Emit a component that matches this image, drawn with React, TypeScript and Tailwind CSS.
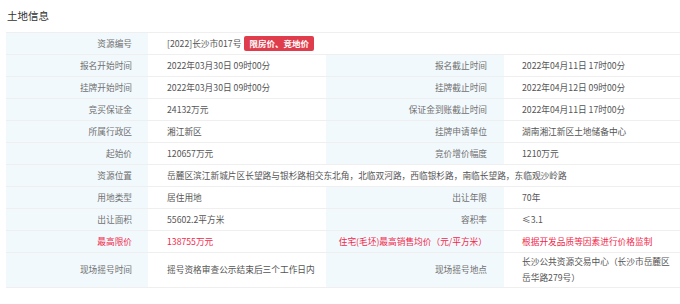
import React from "react";

type Row = {
    label: string;
    value: React.ReactNode;
    label2?: string;
    value2?: React.ReactNode;
    red?: boolean;
    tall?: boolean;
};

const ROWS: Row[] = [
    {
        label: "资源编号",
        value: (
            <span className="flex items-center gap-[3px]">
                <span>[2022]长沙市017号</span>
                <span className="rounded-[2px] bg-[#df3d4c] px-[5px] text-[8.5px] leading-[15px] font-bold text-white">
                    限房价、竞地价
                </span>
            </span>
        ),
    },
    { label: "报名开始时间", value: "2022年03月30日 09时00分", label2: "报名截止时间", value2: "2022年04月11日 17时00分" },
    { label: "挂牌开始时间", value: "2022年03月30日 09时00分", label2: "挂牌截止时间", value2: "2022年04月12日 09时00分" },
    { label: "竞买保证金", value: "24132万元", label2: "保证金到账截止时间", value2: "2022年04月11日 17时00分" },
    { label: "所属行政区", value: "湘江新区", label2: "挂牌申请单位", value2: "湖南湘江新区土地储备中心" },
    { label: "起始价", value: "120657万元", label2: "竞价增价幅度", value2: "1210万元" },
    { label: "资源位置", value: "岳麓区滨江新城片区长望路与银杉路相交东北角，北临双河路，西临银杉路，南临长望路，东临观沙岭路" },
    { label: "用地类型", value: "居住用地", label2: "出让年限", value2: "70年" },
    { label: "出让面积", value: "55602.2平方米", label2: "容积率", value2: "≤3.1" },
    {
        label: "最高限价",
        value: "138755万元",
        label2: "住宅(毛坯)最高销售均价（元/平方米）",
        value2: "根据开发品质等因素进行价格监制",
        red: true,
    },
    {
        label: "现场摇号时间",
        value: "摇号资格审查公示结束后三个工作日内",
        label2: "现场摇号地点",
        value2: (
            <>
                长沙公共资源交易中心（长沙市岳麓区
                <br />
                岳华路279号）
            </>
        ),
        tall: true,
    },
];

export default function App() {
    return (
        <div
            className="h-[304px] w-[680px] overflow-hidden bg-white"
            style={{ fontFamily: '"Noto Sans CJK SC", "Noto Sans", sans-serif' }}
        >
            <div className="flex h-[32px] items-center pl-[7px] text-[10.5px] text-[#333]">土地信息</div>
            <table className="ml-[6px] w-[674px] table-fixed border-collapse text-[8.7px]">
                <colgroup>
                    <col className="w-[142px]" />
                    <col className="w-[178px]" />
                    <col className="w-[178px]" />
                    <col />
                </colgroup>
                <tbody>
                    {ROWS.map((row) => {
                        const labelColor = row.red ? "text-[#f0284a]" : "text-[#707070]";
                        const valueColor = row.red ? "text-[#f0284a]" : "text-[#555]";
                        const h = row.tall ? "h-[35px]" : "h-[22px]";
                        return (
                            <tr key={row.label} className={`${h} border-t border-b border-[#efefef]`}>
                                <td className={`bg-[#f2f9fd] pr-[16px] text-right ${labelColor}`}>{row.label}</td>
                                {row.label2 ? (
                                    <>
                                        <td className={`pl-[19px] ${valueColor}`}>{row.value}</td>
                                        <td className={`bg-[#f2f9fd] pr-[17px] text-right whitespace-nowrap ${labelColor}`}>
                                            {row.label2}
                                        </td>
                                        <td className={`pl-[18px] leading-[16px] ${valueColor}`}>{row.value2}</td>
                                    </>
                                ) : (
                                    <td colSpan={3} className={`pl-[19px] whitespace-nowrap ${valueColor}`}>
                                        {row.value}
                                    </td>
                                )}
                            </tr>
                        );
                    })}
                </tbody>
            </table>
        </div>
    );
}
